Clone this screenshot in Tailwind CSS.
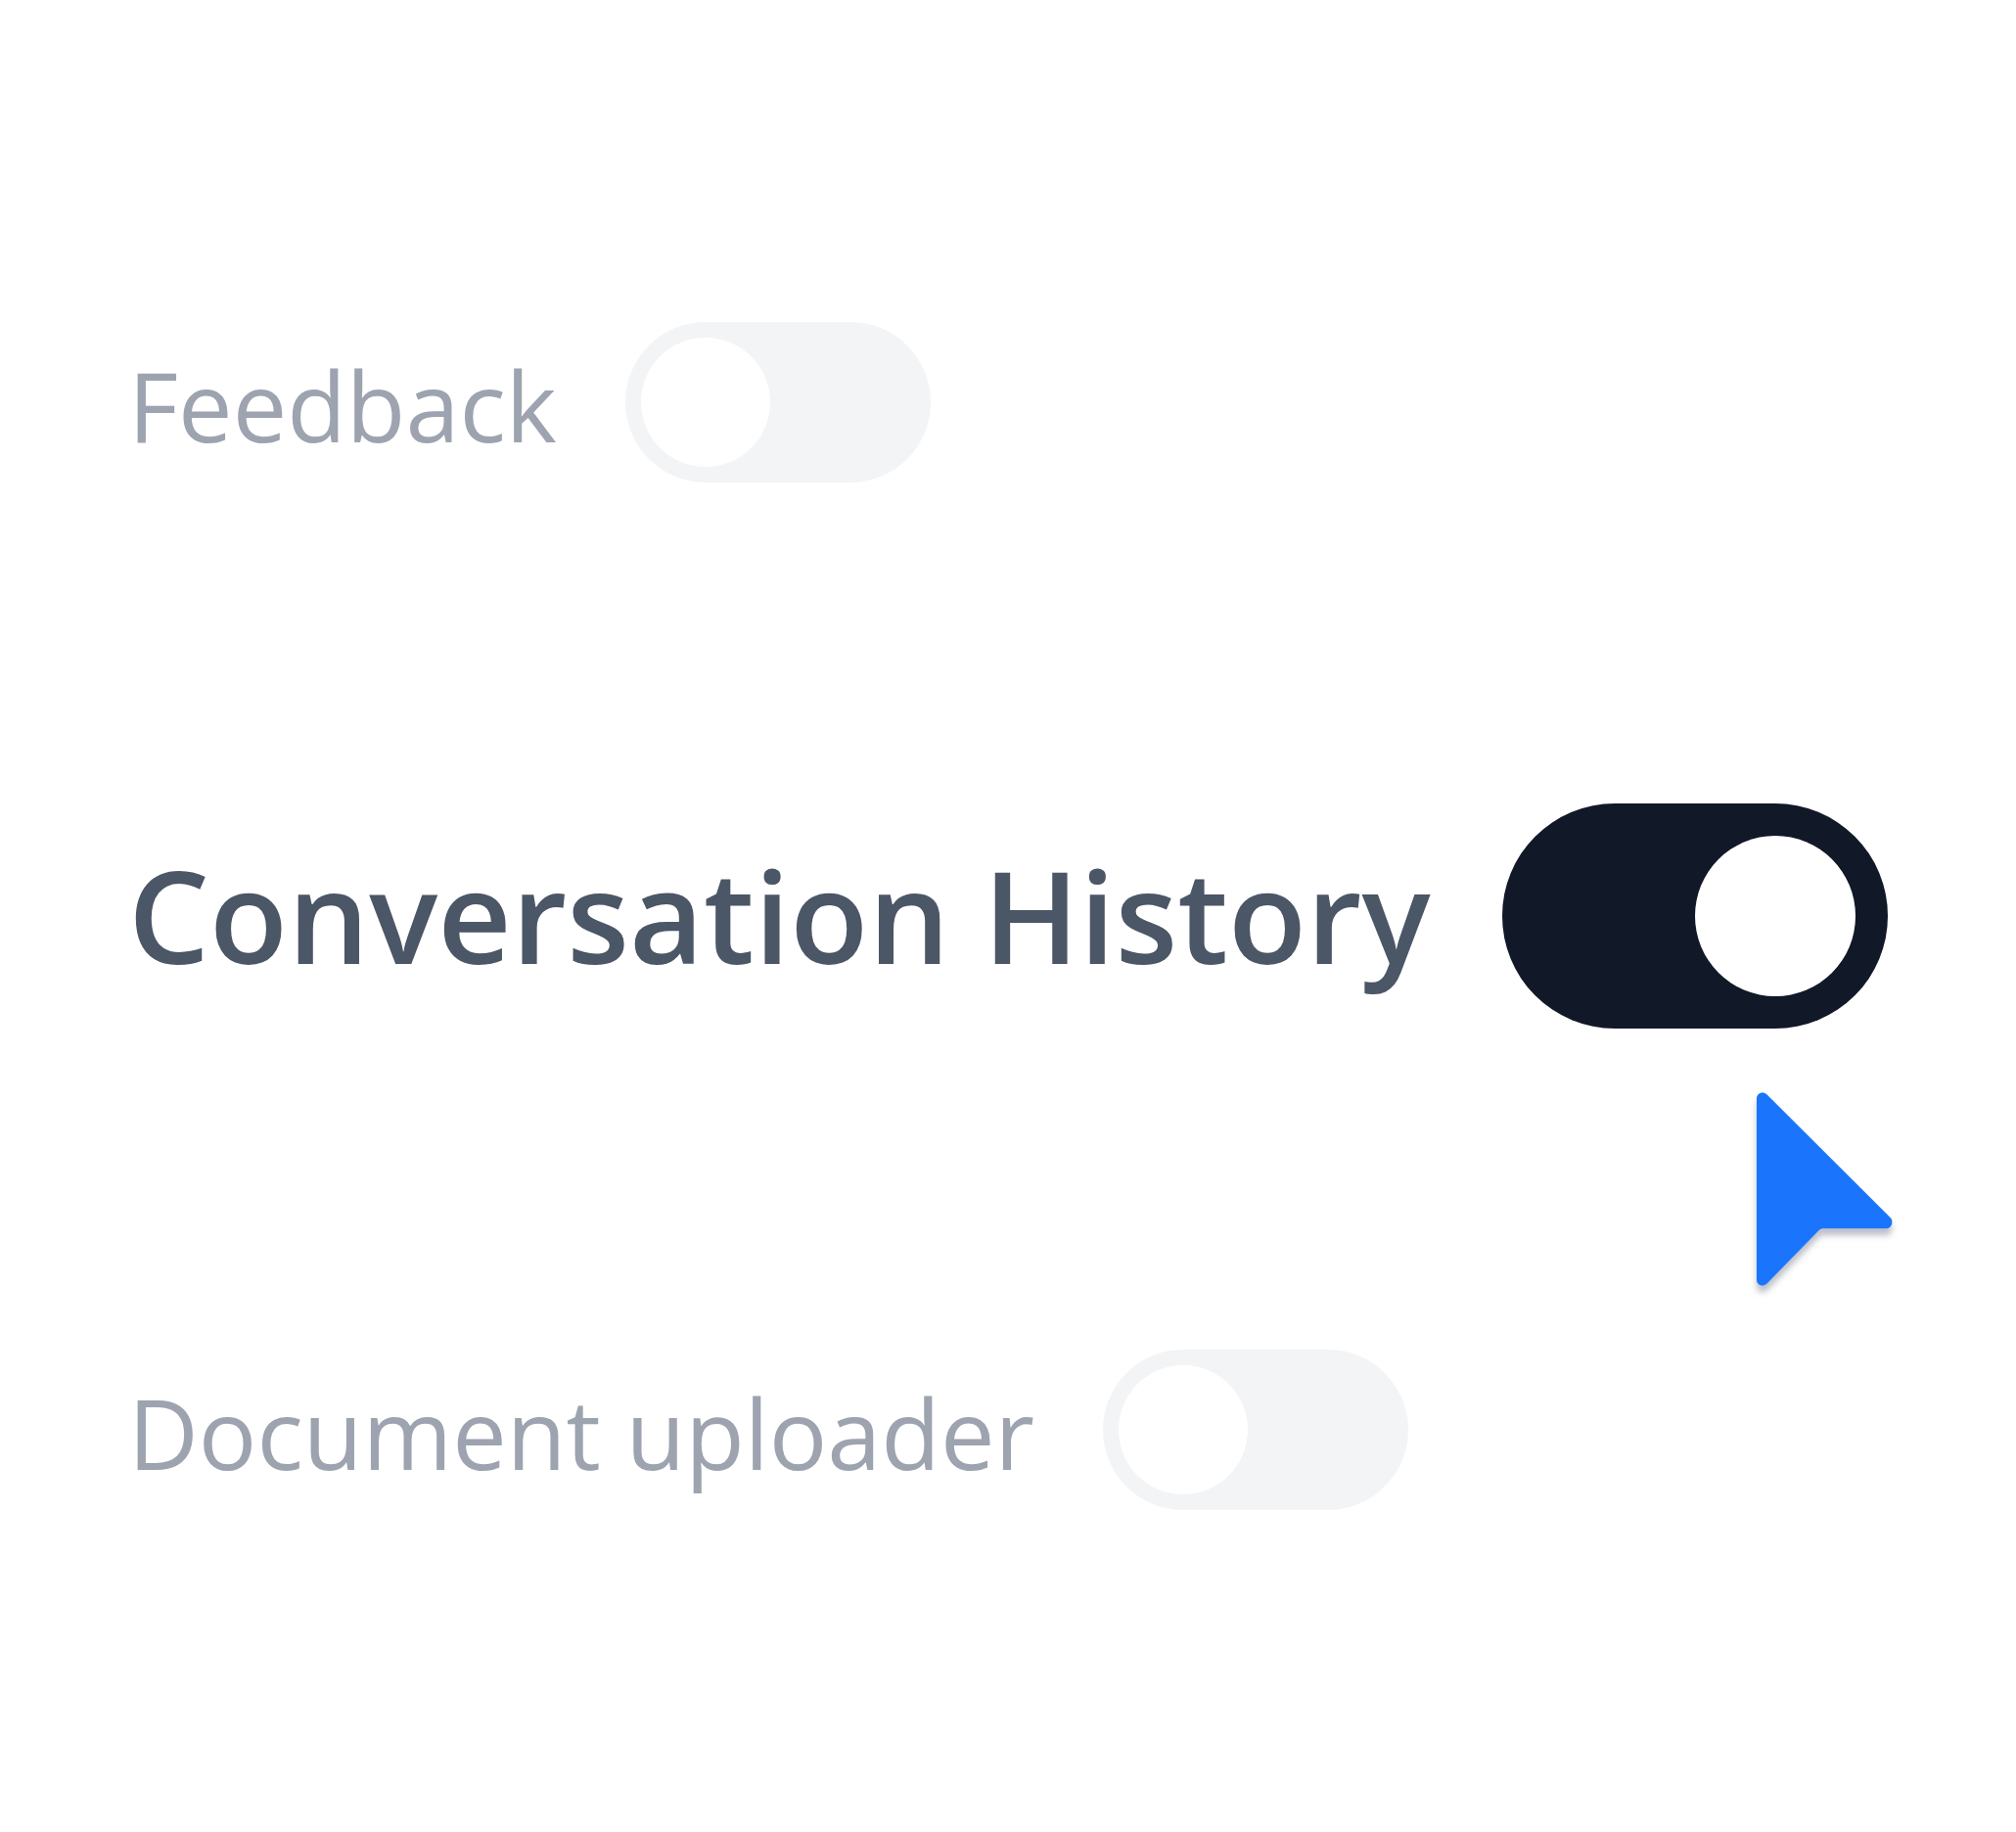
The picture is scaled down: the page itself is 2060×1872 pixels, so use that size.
<!DOCTYPE html>
<html lang="en">
<head>
<meta charset="utf-8">
<meta name="viewport" content="width=device-width, initial-scale=1">
<title>Settings</title>
<script src="https://cdn.jsdelivr.net/npm/@tailwindcss/browser@4"></script>
</head>
<body class="bg-white font-['Open_Sans',sans-serif]">
<main class="flex min-h-screen flex-col justify-center gap-[328px] px-[131px]">
  <div class="flex items-center gap-[70px]">
    <label for="feedback" class="pt-1 text-[99px] leading-none whitespace-nowrap text-[#9da3af]">Feedback</label>
    <input id="feedback" type="checkbox" role="switch" class="h-[164px] w-[312px] shrink-0 cursor-pointer appearance-none rounded-full bg-[#f3f4f6] p-4 before:block before:size-[132px] before:rounded-full before:bg-white checked:bg-[#111827] checked:before:ml-auto">
  </div>
  <div class="flex items-center gap-[73px]">
    <label for="history" class="pb-1 text-[131px] leading-none font-semibold whitespace-nowrap text-[#4b5666]">Conversation History</label>
    <div class="relative shrink-0">
      <input id="history" type="checkbox" role="switch" checked class="block h-[230px] w-[394px] cursor-pointer appearance-none rounded-full bg-[#f3f4f6] p-[33px] before:block before:size-[164px] before:rounded-full before:bg-white checked:bg-[#111827] checked:before:ml-auto">
      <!-- pointer resting below the switch -->
      <svg class="pointer-events-none absolute top-full -right-8 mt-[39px] h-[250px] w-[200px] drop-shadow-[0_7px_3px_rgba(17,24,60,0.28)]" viewBox="0 0 200 250" aria-hidden="true">
        <path fill="#1a75fc" d="M34 32.3C34 26.9 40.5 24.5 44.3 28.2L170.7 154.3C174.3 158 171.8 165.3 166.5 165.3H101.5Q99.5 165.3 98 166.8L44.3 221.8C40.5 225.5 34 223.2 34 217.8Z"/>
      </svg>
    </div>
  </div>
  <div class="flex items-center gap-[70px]">
    <label for="uploader" class="pt-1 text-[99px] leading-none whitespace-nowrap text-[#9da3af]">Document uploader</label>
    <input id="uploader" type="checkbox" role="switch" class="h-[164px] w-[312px] shrink-0 cursor-pointer appearance-none rounded-full bg-[#f3f4f6] p-4 before:block before:size-[132px] before:rounded-full before:bg-white checked:bg-[#111827] checked:before:ml-auto">
  </div>
</main>
</body>
</html>
